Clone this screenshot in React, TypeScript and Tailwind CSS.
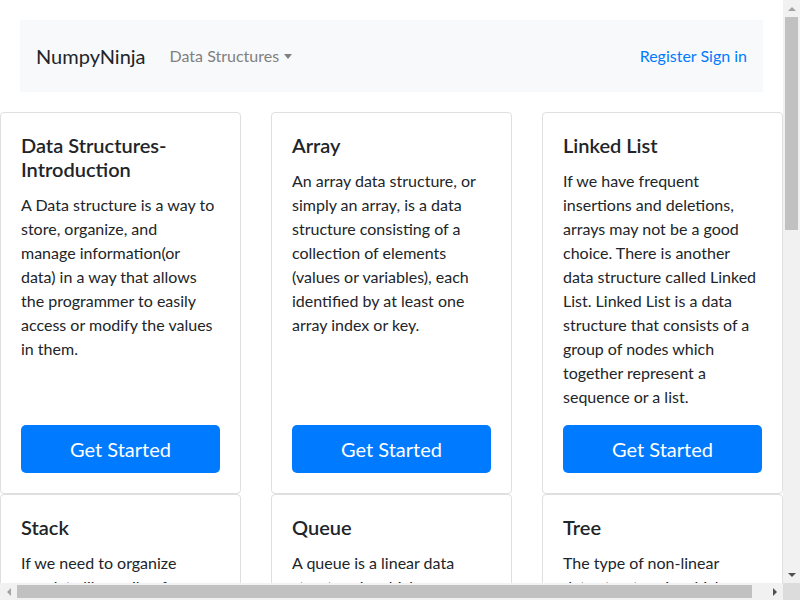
import type { ReactNode } from 'react'

// lines are broken where the reference breaks them
const topics: { title: ReactNode; lines: string[] }[] = [
  {
    title: 'Data Structures-Introduction',
    lines: [
      'A Data structure is a way to',
      'store, organize, and',
      'manage information(or',
      'data) in a way that allows',
      'the programmer to easily',
      'access or modify the values',
      'in them.'
    ]
  },
  {
    title: 'Array',
    lines: [
      'An array data structure, or',
      'simply an array, is a data',
      'structure consisting of a',
      'collection of elements',
      '(values or variables), each',
      'identified by at least one',
      'array index or key.'
    ]
  },
  {
    title: 'Linked List',
    lines: [
      'If we have frequent',
      'insertions and deletions,',
      'arrays may not be a good',
      'choice. There is another',
      'data structure called Linked',
      'List. Linked List is a data',
      'structure that consists of a',
      'group of nodes which',
      'together represent a',
      'sequence or a list.'
    ]
  },
  {
    title: 'Stack',
    lines: [
      'If we need to organize',
      'our data like a pile of',
      'plates, where the last',
      'element added is the first',
      'one removed, we use a',
      'stack.'
    ]
  },
  {
    title: 'Queue',
    lines: [
      'A queue is a linear data',
      'structure in which',
      'elements are added at one',
      'end and removed from the',
      'other end, in First In First',
      'Out order.'
    ]
  },
  {
    title: 'Tree',
    lines: [
      'The type of non-linear',
      'data structure in which',
      'data is organized in a',
      'hierarchy of nodes',
      'connected by edges is',
      'called a tree.'
    ]
  },
  {
    title: 'Graph',
    lines: [
      'A graph is a non-linear data',
      'structure made of a set of',
      'vertices and a set of edges',
      'that connect pairs of',
      'vertices.'
    ]
  }
]

function TopicCard({ title, lines }: { title: ReactNode; lines: string[] }) {
  return (
    <div className="flex flex-col border border-[#dfdfdf] rounded bg-white">
      <div className="flex flex-col flex-1 p-5">
        <h5 className="text-[20px] leading-[24px] font-semibold mb-3 text-[#212529]">{title}</h5>
        <p className="flex-1 mb-4 text-[16px] leading-[24px] text-[#212529]">
          {lines.map((l, i) => (
            <span key={i} className="block whitespace-nowrap">
              {l}
            </span>
          ))}
        </p>
        <button className="w-full h-[48px] rounded-[5px] bg-[#007bff] text-white text-[20px]">
          Get Started
        </button>
      </div>
    </div>
  )
}

export default function App() {
  return (
    <div className="w-[800px] h-[600px] overflow-hidden flex flex-col bg-white font-['Lato','Noto_Sans',sans-serif] text-[#212529]">
      <div className="flex h-[583px]">
        {/* page viewport */}
        <div className="w-[783px] h-[583px] overflow-hidden">
          <div className="pt-5 px-5">
            <nav className="flex items-center h-[72px] px-4 bg-[#f8f9fa]">
              <span className="text-[20px] mr-4 text-[#212529]">NumpyNinja</span>
              <span className="px-2 text-[16px] text-[#808081] flex items-center">
                Data Structures
                <span className="ml-[5px] w-0 h-0 border-x-[4px] border-x-transparent border-t-[5px] border-t-[#808081]" />
              </span>
              <span className="ml-auto text-[16px] text-[#007bff]">Register Sign in</span>
            </nav>
          </div>
          <div className="pt-5">
            <div className="grid grid-cols-[241px_241px_241px] gap-x-[30px]">
              {topics.map((t, i) => (
                <TopicCard key={i} title={t.title} lines={t.lines} />
              ))}
            </div>
          </div>
        </div>
        {/* vertical scrollbar */}
        <div className="w-[17px] h-[583px] bg-[#f1f1f1] flex flex-col items-center">
          <div className="h-[17px] flex items-center justify-center">
            <span className="w-0 h-0 border-x-[4px] border-x-transparent border-b-[4px] border-b-[#a3a3a3]" />
          </div>
          <div className="w-[13px] h-[213px] bg-[#c1c1c1]" />
          <div className="flex-1" />
          <div className="h-[17px] flex items-center justify-center">
            <span className="w-0 h-0 border-x-[4px] border-x-transparent border-t-[4px] border-t-[#505050]" />
          </div>
        </div>
      </div>
      <div className="flex h-[17px]">
        {/* horizontal scrollbar */}
        <div className="w-[783px] h-[17px] bg-[#f1f1f1] flex items-center">
          <div className="w-[17px] flex items-center justify-center">
            <span className="w-0 h-0 border-y-[4px] border-y-transparent border-r-[4px] border-r-[#a3a3a3]" />
          </div>
          <div className="w-[735px] h-[13px] bg-[#c1c1c1]" />
          <div className="flex-1" />
          <div className="w-[17px] flex items-center justify-center">
            <span className="w-0 h-0 border-y-[4px] border-y-transparent border-l-[4px] border-l-[#505050]" />
          </div>
        </div>
        <div className="w-[17px] h-[17px] bg-[#dcdcdc]" />
      </div>
    </div>
  )
}
